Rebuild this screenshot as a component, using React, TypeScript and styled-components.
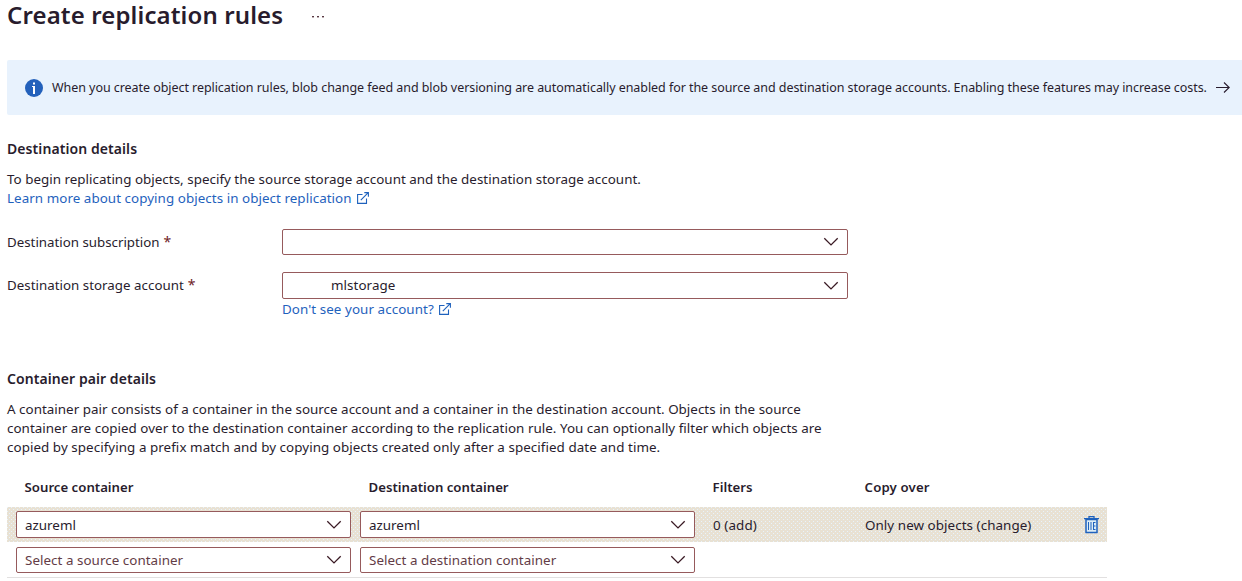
import React from 'react';
import styled, { createGlobalStyle, css } from 'styled-components';

const GlobalStyle = createGlobalStyle`
  * { box-sizing: border-box; }
  html, body { margin: 0; background: #fff; }
  body {
    font-family: 'Noto Sans', 'Open Sans', sans-serif;
    font-size: 13.4px;
    line-height: 19px;
    color: #281c2d;
    overflow: hidden;
  }
`;

const ink = '#281c2d';
const link = '#1f62bd';
const outline = '#965a5c';

const Page = styled.main`
  display: flex;
  flex-direction: column;
  width: 1242px;
  height: 581px;
  padding-left: 7px;
  overflow: hidden;
`;

const Text = styled.span<{ $track?: number }>`
  white-space: nowrap;
  letter-spacing: ${(p) => p.$track ?? 0}px;
`;

const TitleBar = styled.header`
  display: flex;
  align-items: center;
  gap: 28px;
  height: 32px;
  margin-bottom: 28px;
`;

const Title = styled.h1`
  margin: 0 0 2px;
  font-size: 24px;
  font-weight: 600;
  line-height: 30px;
`;

const Banner = styled.section`
  display: flex;
  align-items: center;
  height: 55px;
  padding-left: 18px;
  background: #e8f2fd;
  border-radius: 2px 0 0 2px;
`;

const BannerText = styled.p`
  margin: 0 9px;
  width: 1155px;
  font-size: 12.5px;
`;

const SectionTitle = styled.h2`
  margin: 0;
  font-size: 14px;
  line-height: 19px;
  font-weight: 600;
`;

const Paragraph = styled.p`
  display: flex;
  flex-direction: column;
  margin: 0;
`;

const Link = styled.a`
  display: flex;
  align-items: center;
  gap: 5px;
  color: ${link};

  svg {
    margin-bottom: 2px;
  }
`;

const Field = styled.div`
  display: flex;
  align-items: flex-start;
`;

const Label = styled.label`
  width: 275px;
  padding-top: 4px;
  font-size: 13.3px;
`;

const Required = styled.span`
  margin-left: 4px;
  color: #6e2328;
  font-size: 14px;
  line-height: 18px;
`;

const Select = styled.div<{ $w: number; $h: number; $indent?: number }>`
  display: flex;
  align-items: center;
  justify-content: space-between;
  width: ${(p) => p.$w}px;
  height: ${(p) => p.$h}px;
  padding: 0 8px 0 ${(p) => p.$indent ?? 8}px;
  border: 1px solid ${outline};
  border-radius: 2px;
  background: #fff;
`;

const Placeholder = styled.span`
  padding-top: 1px;
  color: #633c46;
`;

const Value = styled.span`
  padding-top: 1px;
`;

const Table = styled.div`
  width: 1100px;
  border-bottom: 1px solid #e2e0e0;
`;

const dotted = css`
  background-color: #e8e1d3;
  background-image:
    conic-gradient(from 270deg at 1px 1px, #e8f3fc 0 90deg, transparent 90deg),
    conic-gradient(from 270deg at 1px 1px, #e8f3fc 0 90deg, transparent 90deg);
  background-size: 4px 4px;
  background-position: 0 0, 2px 2px;
`;

const Row = styled.div<{ $h: number; $active?: boolean }>`
  display: grid;
  grid-template-columns: 344px 344px 152px 219px 1fr;
  align-items: center;
  height: ${(p) => p.$h}px;
  padding-left: 9px;
  ${(p) => p.$active && dotted}
`;

const HeadCell = styled.div`
  padding-left: 8.6px;
  font-size: 13.2px;
  font-weight: 600;
`;

const Cell = styled.div`
  display: flex;
  align-items: center;
  padding: 1px 0 0 9px;
`;

const Chevron = () => (
  <svg width="16" height="10" viewBox="0 0 16 10" fill="none" stroke="#3a1a24" strokeWidth="1.3">
    <path d="M1.3 1.2 8 7.9l6.7-6.7" />
  </svg>
);

const External = () => (
  <svg width="12" height="12" viewBox="0 0 12 12" fill="none" stroke={link} strokeWidth="1.1">
    <path d="M5.5 2.5H.6v8.9h8.9V6.5M3.8 8.2l7.2-7.4M7.3.6h4.1v4.1" />
  </svg>
);

const Info = () => (
  <svg width="18" height="18" viewBox="0 0 18 18">
    <circle cx="9" cy="9" r="9" fill="#2361bb" />
    <rect x="8" y="3.5" width="2" height="2" fill="#fff" />
    <path d="M7 7h3v8H8V8H7z" fill="#fff" />
  </svg>
);

const Arrow = () => (
  <svg width="14" height="11" viewBox="0 0 14 11" fill="none" stroke={ink} strokeWidth="1.1">
    <path d="M0 5.5h13M8 .5l5.2 5L8 10.5" />
  </svg>
);

const More = () => (
  <svg width="14" height="4" viewBox="0 0 14 4" fill="#5a3a44">
    <rect x="1" y="2" width="2" height="1.4" />
    <rect x="6" y="2" width="2" height="1.4" />
    <rect x="11" y="2" width="2" height="1.4" />
  </svg>
);

const Trash = () => (
  <svg width="15" height="18" viewBox="0 0 15 18" fill="none">
    <path d="M2 3.5h11v13H2z" fill="#dcecf6" stroke="#1f62bd" strokeWidth="1.5" />
    <path d="M0 2.7h15M5 2.5V.7h5v1.8" stroke="#1f62bd" strokeWidth="1.3" />
    <path d="M4.5 6v8M7 6v8M9.5 6v8M9.5 6.5H11.5M9.5 10H11.5M9.5 13.5H11.5" stroke="#1f62bd" strokeWidth="1" />
  </svg>
);

const DestinationSection = styled.section`
  padding-top: 24px;
`;

const Gap = styled.div<{ $h: number }>`
  height: ${(p) => p.$h}px;
`;

const HelpRow = styled.div`
  padding-left: 275px;
  margin-top: 1px;
`;

export default function App() {
  return (
    <Page>
      <GlobalStyle />
      <TitleBar>
        <Title><Text $track={0.12}>Create replication rules</Text></Title>
        <More />
      </TitleBar>
      <Banner>
        <Info />
        <BannerText>
          <Text $track={-0.058}>
            When you create object replication rules, blob change feed and blob versioning are automatically enabled for the source and destination storage accounts. Enabling these features may increase costs.
          </Text>
        </BannerText>
        <Arrow />
      </Banner>

      <DestinationSection>
        <SectionTitle><Text $track={0.08}>Destination details</Text></SectionTitle>
        <Gap $h={12} />
        <Paragraph>
          <Text $track={0.02}>To begin replicating objects, specify the source storage account and the destination storage account.</Text>
          <Link><Text $track={0.05}>Learn more about copying objects in object replication</Text><External /></Link>
        </Paragraph>
        <Gap $h={21} />
        <Field>
          <Label><Text>Destination subscription</Text><Required>*</Required></Label>
          <Select $w={566} $h={26}><Text /><Chevron /></Select>
        </Field>
        <Gap $h={17} />
        <Field>
          <Label><Text $track={0.03}>Destination storage account</Text><Required>*</Required></Label>
          <Select $w={566} $h={27} $indent={48}><Text $track={0.05}>mlstorage</Text><Chevron /></Select>
        </Field>
        <HelpRow>
          <Link><Text $track={0.07}>Don't see your account?</Text><External /></Link>
        </HelpRow>
      </DestinationSection>

      <Gap $h={50} />
      <SectionTitle><Text $track={0.07}>Container pair details</Text></SectionTitle>
      <Gap $h={12} />
      <Paragraph>
        <Text $track={0.02}>A container pair consists of a container in the source account and a container in the destination account. Objects in the source</Text>
        <Text $track={0.03}>container are copied over to the destination container according to the replication rule. You can optionally filter which objects are</Text>
        <Text $track={0.055}>copied by specifying a prefix match and by copying objects created only after a specified date and time.</Text>
      </Paragraph>
      <Gap $h={10} />
      <Table>
        <Row $h={40}>
          <HeadCell><Text>Source container</Text></HeadCell>
          <HeadCell><Text>Destination container</Text></HeadCell>
          <HeadCell><Text>Filters</Text></HeadCell>
          <HeadCell><Text $track={0.15}>Copy over</Text></HeadCell>
        </Row>
        <Row $h={35} $active>
          <Select $w={335} $h={27}><Value>azureml</Value><Chevron /></Select>
          <Select $w={335} $h={27}><Value>azureml</Value><Chevron /></Select>
          <Cell><Text $track={0.1}>0 (add)</Text></Cell>
          <Cell><Text $track={0.06}>Only new objects (change)</Text></Cell>
          <Cell><Trash /></Cell>
        </Row>
        <Row $h={35}>
          <Select $w={335} $h={26}><Placeholder><Text $track={0.04}>Select a source container</Text></Placeholder><Chevron /></Select>
          <Select $w={335} $h={26}><Placeholder><Text $track={0.04}>Select a destination container</Text></Placeholder><Chevron /></Select>
        </Row>
      </Table>
    </Page>
  );
}
